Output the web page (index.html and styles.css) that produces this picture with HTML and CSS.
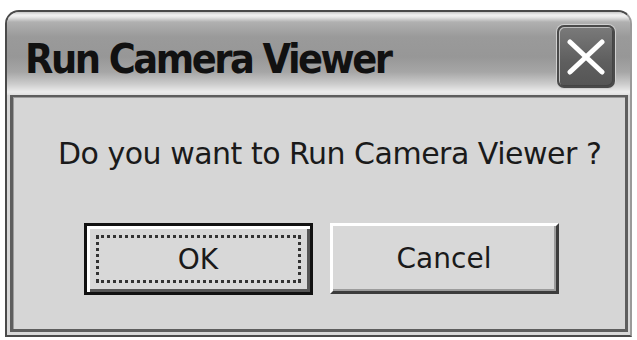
FILE: index.html
```html
<!DOCTYPE html>
<html>
<head>
<meta charset="utf-8">
<link rel="stylesheet" href="styles.css">
</head>
<body>
<div class="window">
  <div class="titlebar">
    <span class="title">Run Camera Viewer</span>
    <button class="close" aria-label="Close">
      <svg width="40" height="36" viewBox="0 0 40 36"><path d="M4 3 L36 33 M36 3 L4 33" stroke="#fff" stroke-width="5" stroke-linecap="round" fill="none"/></svg>
    </button>
  </div>
  <div class="client">
    <p class="message">Do you want to Run Camera Viewer ?</p>
    <div class="buttons">
      <button class="btn btn-default"><span class="focus">OK</span></button>
      <button class="btn">Cancel</button>
    </div>
  </div>
</div>
</body>
</html>
```

FILE: styles.css
```css
html, body {
  margin: 0;
  padding: 0;
  background: #fff;
}
body {
  width: 637px;
  height: 340px;
  overflow: hidden;
  font-family: "DejaVu Sans", sans-serif;
}
.window {
  box-sizing: border-box;
  margin: 10px 0 0 5px;
  width: 627px;
  height: 327px;
  border: 2px solid #4a4a4a;
  border-right-color: #9a9a9a;
  border-radius: 14px 14px 0 0;
  background: #d8d8d8;
  padding: 0 2px 3px 3px;
  display: flex;
  flex-direction: column;
}
.titlebar {
  height: 83px;
  flex: none;
  margin: 0 -2px 0 -3px;
  border-radius: 12px 12px 0 0;
  background: linear-gradient(to bottom,
    #c8c8c8 0px, #f2f2f2 3px, #e8e8e8 5px, #b0b0b0 10px,
    #9a9a9a 25px, #979797 45px, #a6a6a6 60px, #cccccc 72px,
    #ececec 80px, #e0e0e0 83px);
  display: flex;
  justify-content: space-between;
  align-items: flex-start;
  padding: 0 15px 0 18px;
}
.title {
  font-family: "DejaVu Sans Condensed", "DejaVu Sans", sans-serif;
  font-weight: bold;
  font-size: 41px;
  line-height: 50px;
  padding-top: 22px;
  color: #111;
  letter-spacing: -2.5px;
}
.close {
  box-sizing: border-box;
  margin-top: 13px;
  width: 58px;
  height: 63px;
  padding: 0;
  border: 2px solid #4a4a4a;
  border-radius: 7px;
  background: linear-gradient(to bottom, #7a7a7a, #5e5e5e 60%, #555);
  box-shadow: inset 1px 1px 0 #bdbdbd, inset -1px -1px 0 #444, 0 0 0 1px #d0d0d0;
  display: flex;
  align-items: center;
  justify-content: center;
}
.client {
  flex: 1;
  border: 3px solid #5e5e5e;
  border-top-width: 2px;
  background: #d6d6d6;
  box-shadow: inset 1px 1px 0 #9c9c9c;
}
.message {
  margin: 0;
  padding: 39px 0 0 45px;
  font-size: 30px;
  line-height: 36px;
  color: #1a1a1a;
  letter-spacing: -0.5px;
}
.buttons {
  margin-top: 51px;
  display: flex;
  justify-content: center;
  gap: 17px;
  padding-left: 4px;
}
.btn {
  box-sizing: border-box;
  width: 229px;
  height: 71px;
  font-family: "DejaVu Sans", sans-serif;
  font-size: 28px;
  color: #1a1a1a;
  background: #d8d8d8;
  border: 3px solid;
  border-color: #fff #3c3c3c #3c3c3c #fff;
  box-shadow: inset -2px -2px 0 #9c9c9c;
  padding: 0;
  display: flex;
  align-items: center;
  justify-content: center;
}
.btn-default {
  height: 72px;
  border: 3px solid #111;
  box-shadow: inset 3px 3px 0 #fff, inset -3px -3px 0 #555;
  padding: 9px;
}
.focus {
  box-sizing: border-box;
  width: 100%;
  height: 100%;
  border: 3px dotted #333;
  display: flex;
  align-items: center;
  justify-content: center;
}
```
